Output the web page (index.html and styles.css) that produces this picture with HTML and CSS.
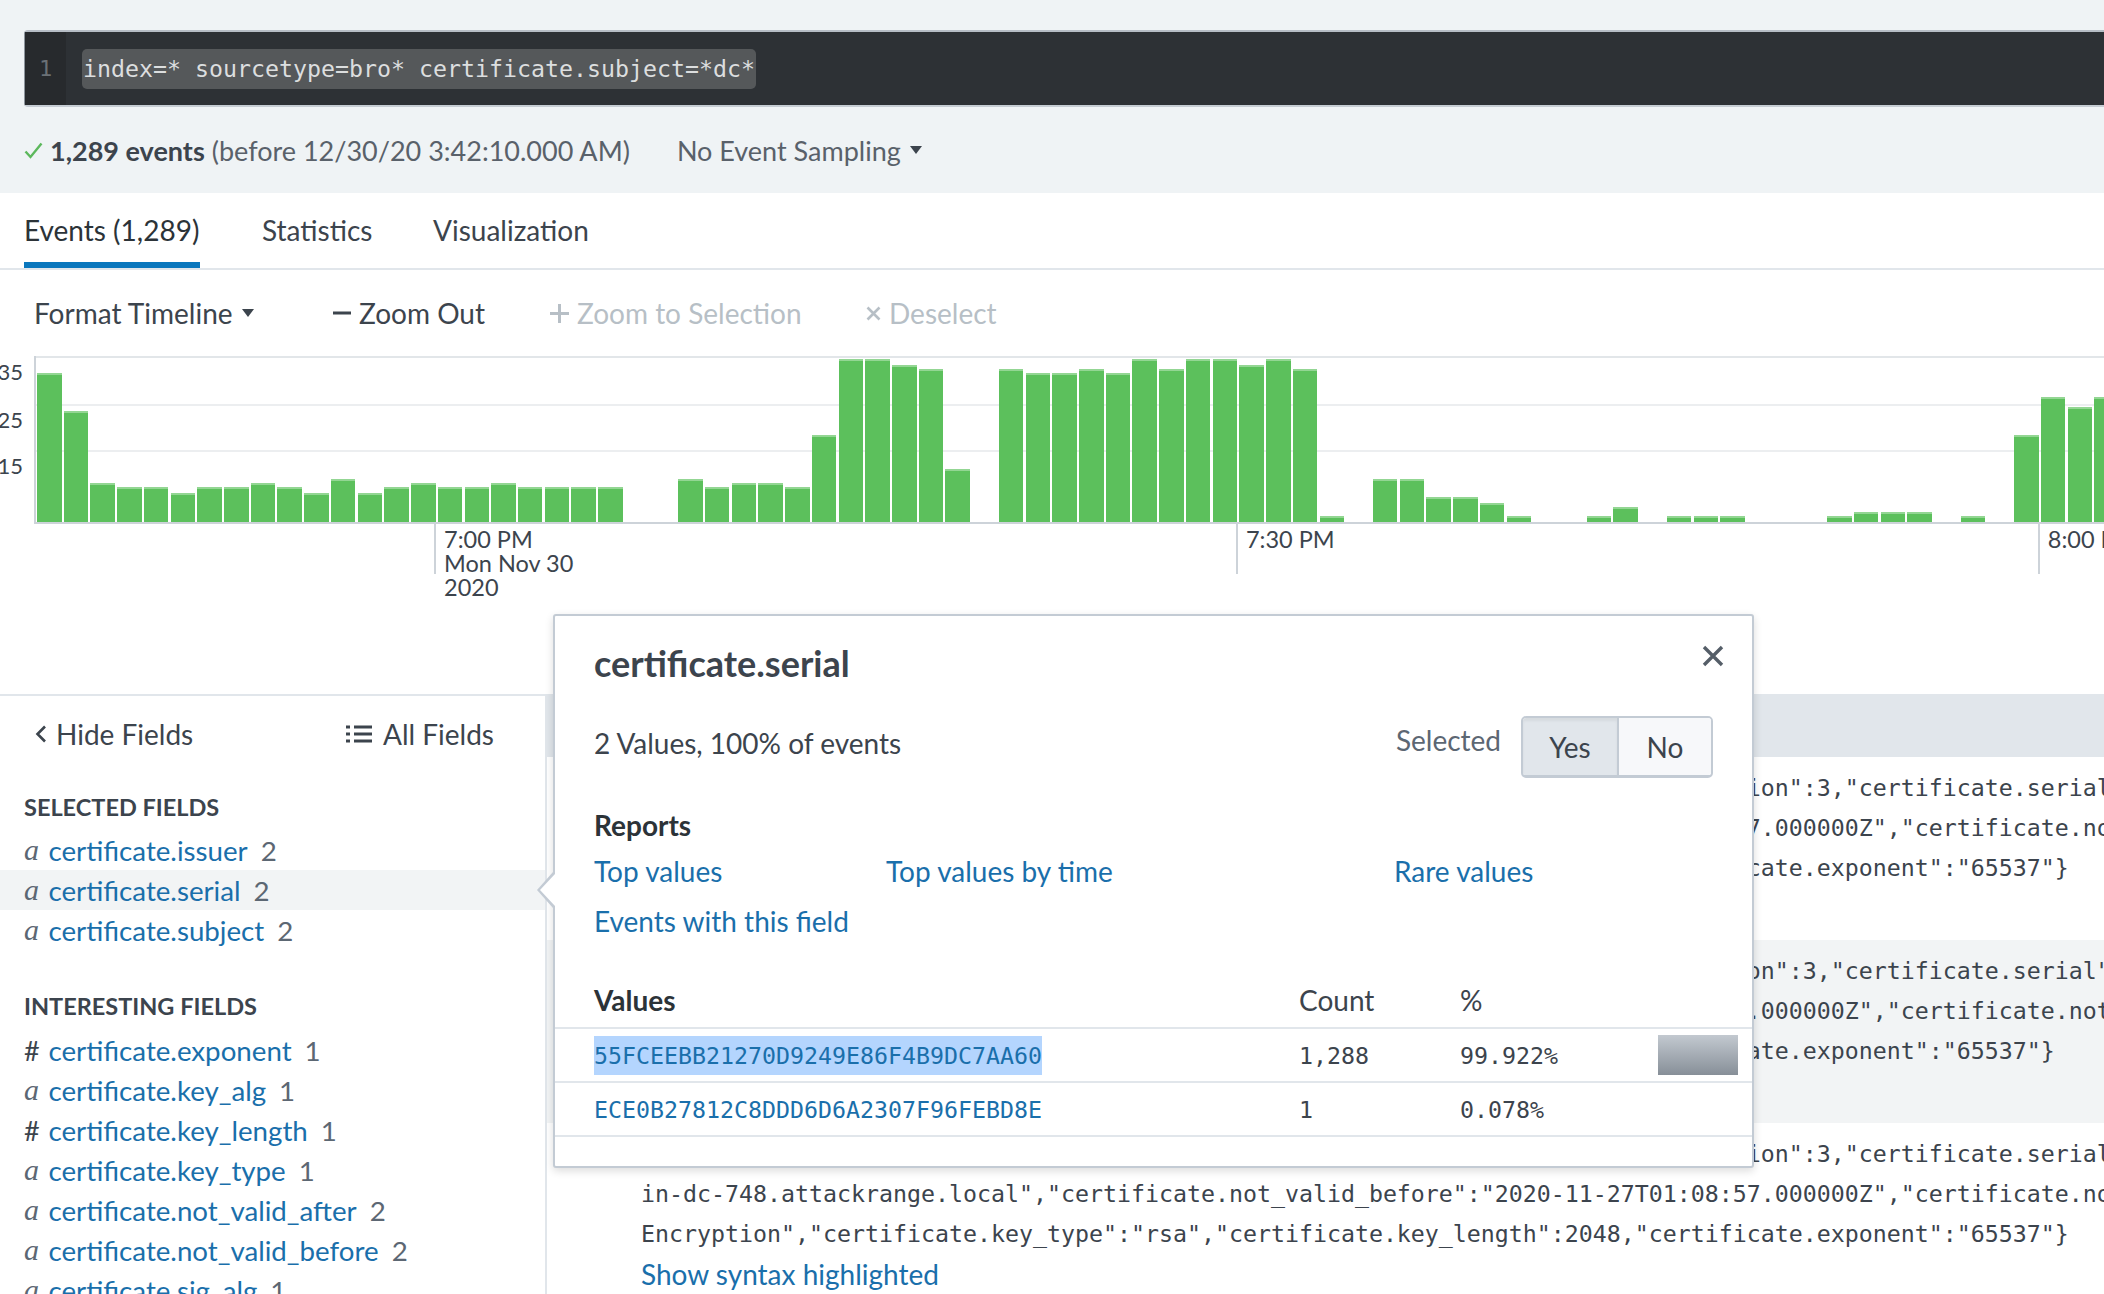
FILE: index.html
```html
<!DOCTYPE html>
<html lang="en">
<head>
<meta charset="utf-8">
<title>Search</title>
<link rel="stylesheet" href="styles.css">
</head>
<body>
<header class="head">
  <div class="searchbar">
    <div class="gutter">1</div>
    <div class="query"><span class="query-sel">index=* sourcetype=bro* certificate.subject=*dc*</span></div>
  </div>
  <div class="status">
    <svg class="check" width="19" height="17" viewBox="0 0 19 17"><polyline points="1.5,9.5 6.5,15 17.5,1.5" fill="none" stroke="#5cb85c" stroke-width="2.4"/></svg>
    <span class="count"><b>1,289 events</b> (before 12/30/20 3:42:10.000 AM)</span>
    <span class="sampling">No Event Sampling<span class="caret"></span></span>
  </div>
</header>

<nav class="tabs">
  <div class="tab active">Events (1,289)</div>
  <div class="tab stats">Statistics</div>
  <div class="tab">Visualization</div>
</nav>

<div class="tl">
  <span class="tl-item tl-format">Format Timeline<span class="caret"></span></span>
  <span class="tl-item tl-zoomout"><svg class="tl-icon" width="18" height="4" viewBox="0 0 18 4"><rect x="0" y="0.5" width="18" height="3" fill="#3c444d"/></svg>Zoom Out</span>
  <span class="tl-item tl-zoomsel disabled"><svg class="tl-icon" width="19" height="19" viewBox="0 0 19 19"><rect x="0" y="8" width="19" height="3" fill="#b7bfc6"/><rect x="8" y="0" width="3" height="19" fill="#b7bfc6"/></svg>Zoom to Selection</span>
  <span class="tl-item disabled"><svg class="tl-icon" width="15" height="15" viewBox="0 0 15 15"><path d="M1.5 1.5 L13.5 13.5 M13.5 1.5 L1.5 13.5" stroke="#b7bfc6" stroke-width="2.6"/></svg>Deselect</span>
</div>

<div class="chart">
  <div class="yaxis">
    <span class="y1">35</span>
    <span class="y2">25</span>
    <span class="y3">15</span>
  </div>
  <div class="plot-wrap">
    <div class="plot">
      <div class="bar" style="height:149px"></div>
      <div class="bar" style="height:111px"></div>
      <div class="bar" style="height:39px"></div>
      <div class="bar" style="height:35px"></div>
      <div class="bar" style="height:35px"></div>
      <div class="bar" style="height:29px"></div>
      <div class="bar" style="height:35px"></div>
      <div class="bar" style="height:35px"></div>
      <div class="bar" style="height:39px"></div>
      <div class="bar" style="height:35px"></div>
      <div class="bar" style="height:29px"></div>
      <div class="bar" style="height:43px"></div>
      <div class="bar" style="height:29px"></div>
      <div class="bar" style="height:35px"></div>
      <div class="bar" style="height:39px"></div>
      <div class="bar" style="height:35px"></div>
      <div class="bar" style="height:35px"></div>
      <div class="bar" style="height:39px"></div>
      <div class="bar" style="height:35px"></div>
      <div class="bar" style="height:35px"></div>
      <div class="bar" style="height:35px"></div>
      <div class="bar" style="height:35px"></div>
      <div class="bar empty"></div>
      <div class="bar empty"></div>
      <div class="bar" style="height:43px"></div>
      <div class="bar" style="height:35px"></div>
      <div class="bar" style="height:39px"></div>
      <div class="bar" style="height:39px"></div>
      <div class="bar" style="height:35px"></div>
      <div class="bar" style="height:87px"></div>
      <div class="bar" style="height:163px"></div>
      <div class="bar" style="height:163px"></div>
      <div class="bar" style="height:157px"></div>
      <div class="bar" style="height:153px"></div>
      <div class="bar" style="height:53px"></div>
      <div class="bar empty"></div>
      <div class="bar" style="height:153px"></div>
      <div class="bar" style="height:149px"></div>
      <div class="bar" style="height:149px"></div>
      <div class="bar" style="height:153px"></div>
      <div class="bar" style="height:149px"></div>
      <div class="bar" style="height:163px"></div>
      <div class="bar" style="height:153px"></div>
      <div class="bar" style="height:163px"></div>
      <div class="bar" style="height:163px"></div>
      <div class="bar" style="height:157px"></div>
      <div class="bar" style="height:163px"></div>
      <div class="bar" style="height:153px"></div>
      <div class="bar" style="height:6px"></div>
      <div class="bar empty"></div>
      <div class="bar" style="height:43px"></div>
      <div class="bar" style="height:43px"></div>
      <div class="bar" style="height:25px"></div>
      <div class="bar" style="height:25px"></div>
      <div class="bar" style="height:19px"></div>
      <div class="bar" style="height:6px"></div>
      <div class="bar empty"></div>
      <div class="bar empty"></div>
      <div class="bar" style="height:6px"></div>
      <div class="bar" style="height:15px"></div>
      <div class="bar empty"></div>
      <div class="bar" style="height:6px"></div>
      <div class="bar" style="height:6px"></div>
      <div class="bar" style="height:6px"></div>
      <div class="bar empty"></div>
      <div class="bar empty"></div>
      <div class="bar empty"></div>
      <div class="bar" style="height:6px"></div>
      <div class="bar" style="height:10px"></div>
      <div class="bar" style="height:10px"></div>
      <div class="bar" style="height:10px"></div>
      <div class="bar empty"></div>
      <div class="bar" style="height:6px"></div>
      <div class="bar empty"></div>
      <div class="bar" style="height:87px"></div>
      <div class="bar" style="height:125px"></div>
      <div class="bar" style="height:115px"></div>
      <div class="bar" style="height:125px"></div>
    </div>
    <div class="xaxis">
      <div class="tick"><span>7:00 PM</span><span>Mon Nov 30</span><span>2020</span></div>
      <div class="tick"><span>7:30 PM</span></div>
      <div class="tick"><span>8:00 PM</span></div>
    </div>
  </div>
</div>

<div class="main">
  <aside class="sidebar">
    <div class="sb-head">
      <span class="sb-hide"><svg class="sb-icon" width="12" height="18" viewBox="0 0 12 18"><polyline points="10,1.5 2.5,9 10,16.5" fill="none" stroke="#3c444d" stroke-width="2.6"/></svg>Hide Fields</span>
      <span class="sb-all"><svg class="sb-icon" width="26" height="18" viewBox="0 0 26 18"><rect x="0" y="0.5" width="4" height="3" fill="#3c444d"/><rect x="8" y="0.5" width="18" height="3" fill="#3c444d"/><rect x="0" y="7.5" width="4" height="3" fill="#3c444d"/><rect x="8" y="7.5" width="18" height="3" fill="#3c444d"/><rect x="0" y="14.5" width="4" height="3" fill="#3c444d"/><rect x="8" y="14.5" width="18" height="3" fill="#3c444d"/></svg>All Fields</span>
    </div>
    <div class="sb-title">SELECTED FIELDS</div>
    <ul class="fields">
      <li class="field"><span class="ftype">a</span><span class="fname">certificate.issuer</span><span class="fcount">2</span></li>
      <li class="field sel"><span class="ftype">a</span><span class="fname">certificate.serial</span><span class="fcount">2</span></li>
      <li class="field"><span class="ftype">a</span><span class="fname">certificate.subject</span><span class="fcount">2</span></li>
    </ul>
    <div class="sb-title interesting">INTERESTING FIELDS</div>
    <ul class="fields">
      <li class="field"><span class="ftype num">#</span><span class="fname">certificate.exponent</span><span class="fcount">1</span></li>
      <li class="field"><span class="ftype">a</span><span class="fname">certificate.key_alg</span><span class="fcount">1</span></li>
      <li class="field"><span class="ftype num">#</span><span class="fname">certificate.key_length</span><span class="fcount">1</span></li>
      <li class="field"><span class="ftype">a</span><span class="fname">certificate.key_type</span><span class="fcount">1</span></li>
      <li class="field"><span class="ftype">a</span><span class="fname">certificate.not_valid_after</span><span class="fcount">2</span></li>
      <li class="field"><span class="ftype">a</span><span class="fname">certificate.not_valid_before</span><span class="fcount">2</span></li>
      <li class="field"><span class="ftype">a</span><span class="fname">certificate.sig_alg</span><span class="fcount">1</span></li>
    </ul>
  </aside>

  <section class="events">
    <div class="ev-head"></div>
    <div class="event">
      <div class="ev-line">{"ts":1606791537.414951,"fingerprint":"8d1a3bc0e2f7d6a4b9c01","certificate.version":3,"certificate.serial":"55FCEEBB21270D9249E86F4B9DC7AA60","certificate.subject":"CN=w</div>
      <div class="ev-line">in-dc-748.attackrange.local","certificate.not_valid_before":"2020-11-27T01:08:57.000000Z","certificate.not_valid_after":"2021-05-29T01:08:57.000000Z","certificate.key_alg":"rsa</div>
      <div class="ev-line">Encryption","certificate.key_type":"rsa","certificate.key_length":2048,"certificate.exponent":"65537"}</div>
      <div class="ev-link">Show syntax highlighted</div>
    </div>
    <div class="event alt">
      <div class="ev-line">{"ts":1606791532.41495,"fingerprint":"8d1a3bc0e2f7d6a4b9c01","certificate.version":3,"certificate.serial":"55FCEEBB21270D9249E86F4B9DC7AA60","certificate.subject":"CN=wi</div>
      <div class="ev-line">n-dc-748.attackrange.local","certificate.not_valid_before":"2020-11-27T01:08:57.000000Z","certificate.not_valid_after":"2021-05-29T01:08:57.000000Z","certificate.key_alg":"rsaE</div>
      <div class="ev-line">ncryption","certificate.key_type":"rsa","certificate.key_length":2048,"certificate.exponent":"65537"}</div>
      <div class="ev-link">Show syntax highlighted</div>
    </div>
    <div class="event">
      <div class="ev-line">{"ts":1606791529.208417,"fingerprint":"8d1a3bc0e2f7d6a4b9c01","certificate.version":3,"certificate.serial":"55FCEEBB21270D9249E86F4B9DC7AA60","certificate.subject":"CN=w</div>
      <div class="ev-line">in-dc-748.attackrange.local","certificate.not_valid_before":"2020-11-27T01:08:57.000000Z","certificate.not_valid_after":"2021-05-29T01:08:57.000000Z","certificate.key_alg":"rsa</div>
      <div class="ev-line">Encryption","certificate.key_type":"rsa","certificate.key_length":2048,"certificate.exponent":"65537"}</div>
      <div class="ev-link">Show syntax highlighted</div>
    </div>
  </section>
</div>

<div class="popup">
  <div class="pp-head">
    <h2 class="pp-title">certificate.serial</h2>
    <svg class="pp-close" width="22" height="22" viewBox="0 0 22 22"><path d="M2 2 L20 20 M20 2 L2 20" stroke="#555e68" stroke-width="3.4"/></svg>
  </div>
  <div class="pp-meta">
    <span class="pp-count">2 Values, 100% of events</span>
    <span class="pp-sel">Selected</span>
    <div class="toggle"><span class="tg on">Yes</span><span class="tg off">No</span></div>
  </div>
  <div class="pp-sub">Reports</div>
  <div class="pp-links">
    <a class="link">Top values</a>
    <a class="link">Top values by time</a>
    <a class="link">Rare values</a>
  </div>
  <div class="pp-ev"><a class="link">Events with this field</a></div>
  <div class="vt">
    <div class="vt-row vt-head"><span class="vt-values">Values</span><span>Count</span><span>%</span><span></span></div>
    <div class="vt-row r"><span class="val"><span class="hl">55FCEEBB21270D9249E86F4B9DC7AA60</span></span><span class="num">1,288</span><span class="num">99.922%</span><span class="vbar"></span></div>
    <div class="vt-row r"><span class="val">ECE0B27812C8DDD6D6A2307F96FEBD8E</span><span class="num">1</span><span class="num">0.078%</span><span></span></div>
  </div>
</div>
</body>
</html>
```

FILE: styles.css
```css
* { box-sizing: border-box; margin: 0; padding: 0; }
html, body { width: 2104px; height: 1294px; overflow: hidden; background: #fff; }
body { font-family: Lato, "Open Sans", "DejaVu Sans", sans-serif; color: #3c444d; position: relative; }
ul { list-style: none; }

/* ---------- header ---------- */
.head { height: 193px; background: #eff3f5; padding-top: 30px; }
.searchbar { height: 77px; margin-left: 24px; display: flex; background: #2d3135; border-top: 2px solid #b6bdc5; border-bottom: 2px solid #c5ccd3; border-left: 1px solid #8d959d; border-radius: 4px 0 0 4px; }
.gutter { width: 41px; flex: none; background: #272a2d; color: #6b7176; font-family: "DejaVu Sans Mono", monospace; font-size: 22px; display: flex; align-items: center; justify-content: center; }
.query { display: flex; align-items: center; padding-left: 16px; }
.query-sel { display: block; height: 40px; line-height: 40px; padding: 0 1px; border-radius: 5px; background: #55585a; color: #dcdedf; font-family: "DejaVu Sans Mono", monospace; font-size: 23.25px; white-space: pre; }

.status { height: 86px; display: flex; align-items: center; padding-left: 24px; font-size: 27px; color: #59616a; }
.check { display: block; flex: none; margin-right: 7px; }
.status b { font-weight: 700; color: #3c444d; }
.sampling { margin-left: 47px; display: flex; align-items: center; }
.caret { display: inline-block; width: 0; height: 0; border-left: 6px solid transparent; border-right: 6px solid transparent; border-top: 8px solid #3c444d; margin-left: 9px; }

/* ---------- tabs ---------- */
.tabs { height: 77px; border-bottom: 2px solid #e1e6eb; display: flex; padding-left: 24px; }
.tab { height: 75px; display: flex; align-items: center; font-size: 28px; color: #3c444d; padding-bottom: 2px; white-space: nowrap; }
.tab.active { width: 176px; margin-right: 62px; color: #2c3338; box-shadow: inset 0 -6px 0 #0a77bd; }
.tab.stats { width: 108px; margin-right: 63px; }

/* ---------- timeline controls ---------- */
.tl { height: 86px; display: flex; align-items: center; padding-left: 34px; font-size: 28px; color: #3c444d; }
.tl-item { display: flex; align-items: center; flex: none; white-space: nowrap; }
.tl-format { width: 299px; }
.tl-zoomout { width: 217px; }
.tl-zoomsel { width: 316px; }
.tl-item.disabled { color: #b7bfc6; }
.tl-icon { display: block; margin-right: 8px; }

/* ---------- chart ---------- */
.chart { height: 338px; display: flex; }
.yaxis { width: 23px; flex: none; margin-right: 11px; display: flex; flex-direction: column; align-items: flex-end; font-size: 22px; line-height: 24px; color: #3c444d; padding-top: 4px; }
.yaxis .y2 { margin-top: 24px; }
.yaxis .y3 { margin-top: 22px; }
.plot-wrap { flex: 1; min-width: 0; }
.plot { height: 168px; display: flex; align-items: flex-end; gap: 2.23px; padding-left: 1px; border-left: 2px solid #cdd3d9; border-bottom: 2px solid #cdd3d9; overflow: hidden;
  background:
    linear-gradient(#e2e6e9, #e2e6e9) 0 0 / 100% 2px no-repeat,
    linear-gradient(#eceef0, #eceef0) 0 48px / 100% 2px no-repeat,
    linear-gradient(#eceef0, #eceef0) 0 94px / 100% 2px no-repeat; }
.bar { flex: none; width: 24.5px; background: #5cc05c; border-top: 2px solid #93d693; }
.bar.empty { height: 0; border-top: 0; }
.xaxis { display: flex; padding-left: 400px; }
.tick { flex: none; width: 801.9px; height: 50px; border-left: 2px solid #cdd3d9; padding: 3px 0 0 8px; font-size: 23.5px; line-height: 24px; color: #3c444d; display: flex; flex-direction: column; white-space: nowrap; }

/* ---------- main ---------- */
.main { display: flex; height: 600px; }
.sidebar { width: 547px; flex: none; border-top: 2px solid #e1e6eb; border-right: 2px solid #e1e6eb; }
.sb-head { height: 76px; display: flex; align-items: center; padding-left: 35px; font-size: 28px; color: #3c444d; }
.sb-hide { width: 311px; display: flex; align-items: center; }
.sb-all { display: flex; align-items: center; }
.sb-icon { display: block; margin-right: 9px; }
.sb-all .sb-icon { margin-right: 11px; }
.sb-title { margin: 15px 0 3px 24px; height: 40px; line-height: 40px; font-size: 23.5px; font-weight: 700; color: #3c444d; }
.sb-title.interesting { margin-top: 36px; margin-bottom: 4px; }
.field { height: 40px; display: flex; align-items: center; padding-left: 24px; font-size: 27.7px; white-space: nowrap; }
.field.sel { background: #f2f4f5; }
.ftype { width: 24.5px; flex: none; font-family: "Liberation Serif", serif; font-style: italic; font-size: 30px; line-height: 1; color: #5c6773; }
.ftype.num { font-family: Lato, sans-serif; font-style: normal; font-size: 27px; }
.fname { color: #1a6fab; }
.fcount { margin-left: 13px; color: #5c6773; }

.events { flex: 1; min-width: 0; overflow: hidden; }
.ev-head { height: 63px; background: #e1e6eb; }
.event { padding: 11px 0 12px 94px; }
.event.alt { background: #f2f4f5; }
.ev-line { height: 40px; line-height: 40px; font-family: "DejaVu Sans Mono", monospace; font-size: 23.25px; white-space: pre; color: #3c444d; }
.ev-link { height: 40px; line-height: 40px; font-size: 28px; color: #1a6fab; white-space: nowrap; }

/* ---------- popup ---------- */
.popup { position: absolute; left: 553px; top: 614px; width: 1201px; height: 554px; background: #fff; border: 2px solid #c3cbd4; border-radius: 3px; box-shadow: 0 3px 9px rgba(0, 0, 0, 0.14); }
.popup::before { content: ""; position: absolute; left: -18px; top: 256px; border-top: 18px solid transparent; border-bottom: 18px solid transparent; border-right: 16px solid #c3cbd4; }
.popup::after { content: ""; position: absolute; left: -15px; top: 258px; border-top: 16px solid transparent; border-bottom: 16px solid transparent; border-right: 15px solid #fff; }
.pp-head { display: flex; justify-content: space-between; align-items: flex-start; padding: 27px 28px 0 39px; }
.pp-title { font-size: 36px; font-weight: 700; line-height: 40px; color: #3c444d; }
.pp-close { display: block; margin-top: 2px; }
.pp-meta { margin-top: 33px; height: 62px; padding: 0 39px; display: flex; align-items: center; font-size: 28px; }
.pp-count { flex: 1; margin-bottom: 8px; color: #3c444d; }
.pp-sel { margin-right: 20px; margin-bottom: 14px; color: #5c6773; }
.toggle { display: flex; height: 62px; border: 2px solid #c3cbd4; border-bottom-width: 3px; border-radius: 5px; overflow: hidden; }
.tg { display: flex; align-items: center; justify-content: center; font-size: 28px; color: #3c444d; }
.tg.on { width: 96px; background: #e1e6eb; border-right: 2px solid #c3cbd4; box-shadow: inset 0 3px 3px rgba(0, 0, 0, 0.05); }
.tg.off { width: 92px; background: #f7f8fa; }
.pp-sub { margin: 27px 39px 0; font-size: 28px; font-weight: 700; line-height: 40px; color: #2c3338; }
.pp-links { display: grid; grid-template-columns: 292px 508px auto; margin: 6px 39px 0; line-height: 40px; font-size: 28px; }
.pp-ev { margin: 10px 39px 0; line-height: 40px; font-size: 28px; }
.link { color: #1a6fab; }

.vt { margin-top: 32px; }
.vt-row { display: grid; grid-template-columns: 705px 161px 198px 80px; align-items: center; padding-left: 39px; border-bottom: 2px solid #e1e6eb; }
.vt-head { height: 56px; font-size: 28px; color: #3c444d; }
.vt-values { font-weight: 700; color: #2c3338; }
.vt-row.r { height: 54px; }
.val { font-family: "DejaVu Sans Mono", monospace; font-size: 23.25px; color: #1a6fab; white-space: pre; }
.hl { display: inline-block; background: #b4d5fe; line-height: 39px; }
.num { font-family: "DejaVu Sans Mono", monospace; font-size: 23.25px; color: #3c444d; }
.vbar { display: block; height: 40px; background: linear-gradient(#c3c9d0, #878f98); }
```
